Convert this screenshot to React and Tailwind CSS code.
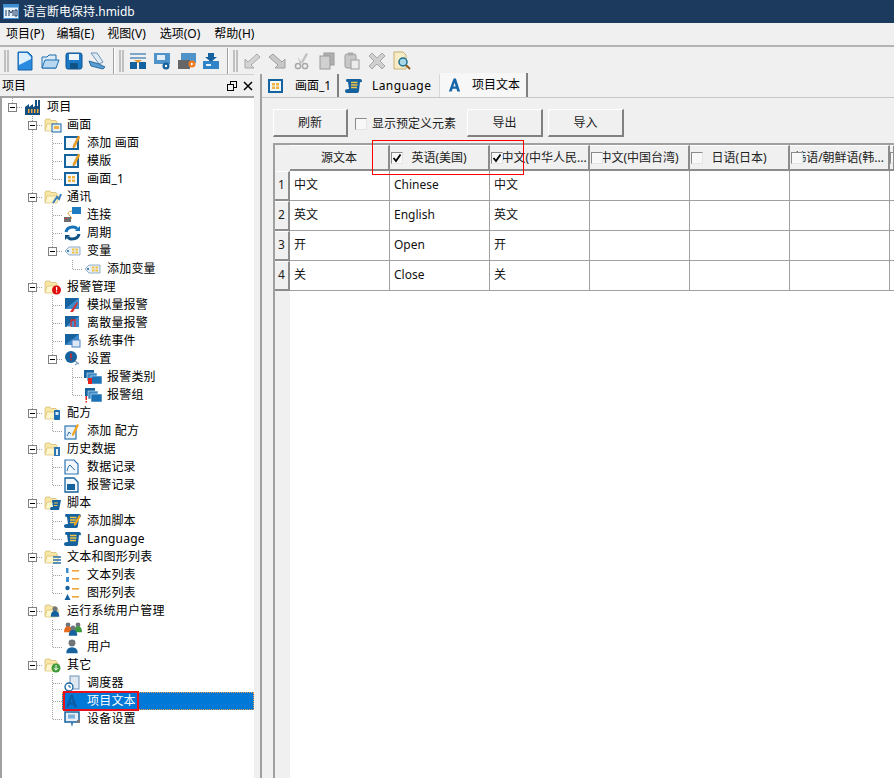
import React from "react";

const F = { fontFamily: '"Noto Sans","Noto Sans CJK SC",sans-serif' };

function Folder({ children }) {
  return (
    <svg width="18" height="16" viewBox="0 0 18 16" className="shrink-0">
      <path d="M1 13V3l1-1h4l1 1.500h5l1 1V13z" fill="#f8e6a4" stroke="#d0b872" strokeWidth="0.7" />
      <path d="M1 14l2-7h12l-2 7z" fill="#fef6cc" stroke="#d8bf72" strokeWidth="0.7" />
      {children}
    </svg>
  );
}

function Win({ children, frame = "#14639f" }) {
  return (
    <svg width="16" height="16" viewBox="0 0 16 16" className="shrink-0">
      <rect x="1" y="2" width="13" height="12" fill="#f3f8fc" stroke={frame} strokeWidth="2" />
      {children}
    </svg>
  );
}

const pencil = <path d="M9 11l5-10 2 1-5 10-2 1z" fill="#f3a51d" stroke="#b96f10" strokeWidth="0.4" />;
const grid = <g fill="#f2b23e"><rect x="4" y="5" width="3" height="2.500" /><rect x="8" y="5" width="3" height="2.500" /><rect x="4" y="8.500" width="3" height="2.500" /><rect x="8" y="8.500" width="3" height="2.500" /></g>;

function Scroll({ pen }) {
  return (
    <svg width="18" height="16" viewBox="0 0 18 16" className="shrink-0">
      <path d="M2 1h13q2 0 2 2t-2 1l-1 9q0 2-2 2H3q-3 0-3-2t3-2h1L3 4Q1 4 1 2.500T2 1z" fill="#15629e" />
      <path d="M6 4.500h6.500M6 7h6.500M6 9.500h6" stroke="#f0c34a" strokeWidth="1.300" />
      {pen && <path d="M10 11l5-9 2 1-5 9-2 1z" fill="#f3a51d" />}
    </svg>
  );
}

function Tag() {
  return (
    <svg width="18" height="14" viewBox="0 0 18 14" className="shrink-0">
      <path d="M1 7l4-4h11v8H5z" fill="#e6eef6" stroke="#7d9ebd" strokeWidth="0.8" />
      <circle cx="4" cy="7" r="1" fill="#15629e" />
      <g fill="#f2c33e"><rect x="8" y="4.500" width="2.500" height="2" /><rect x="11.500" y="4.500" width="2.500" height="2" /><rect x="8" y="7.500" width="2.500" height="2" /><rect x="11.500" y="7.500" width="2.500" height="2" /></g>
    </svg>
  );
}

function Mon({ children }) {
  return (
    <svg width="17" height="16" viewBox="0 0 17 16" className="shrink-0">
      <rect x="1" y="1" width="14" height="11" fill="#15629e" />
      <path d="M1 12L15 1v11z" fill="#3d8bca" />
      {children}
    </svg>
  );
}

function Person({ cx = 8, cy = 5, c = "#15629e", s = 1 }) {
  return (
    <g>
      <circle cx={cx} cy={cy} r={3 * s} fill="#6f747a" />
      <path d={`M${cx - 5 * s} ${cy + 9 * s}q0-6 ${5 * s}-6q${5 * s} 0 ${5 * s} 6z`} fill={c} />
    </g>
  );
}

const A = ({ c = "#1466a8" }) => (
  <svg width="15" height="16" viewBox="0 0 16 16" className="shrink-0">
    <path d="M2 15L7 1h2.500L14 15h-3l-1-3H6l-1 3zM6.800 9.500h2.500L8 5.500z" fill={c} />
  </svg>
);

const icons = {
  factory: (
    <svg width="18" height="17" viewBox="0 0 18 17" className="shrink-0">
      <path d="M1 16V8l4-3v3l4-3v3l2-1V1h2v6h1V1h2v15z" fill="#14507f" />
      <g fill="#f1a73c"><rect x="4" y="10" width="1.500" height="4" /><rect x="7" y="10" width="1.500" height="4" /><rect x="10" y="10" width="1.500" height="4" /><rect x="13" y="10" width="1.500" height="4" /></g>
    </svg>
  ),
  fScreen: <Folder><rect x="8" y="7" width="9" height="8" fill="#eaf2f9" stroke="#14639f" /><rect x="10" y="9" width="5" height="3" fill="#f2b23e" /></Folder>,
  fNet: <Folder><path d="M9 14l4-6 2 2 2-5" stroke="#3a7fb8" strokeWidth="2" fill="none" /></Folder>,
  fAlarm: <Folder><circle cx="12.500" cy="11" r="4.500" fill="#e01010" /><rect x="12" y="8" width="1.200" height="3.500" fill="#fff" /><rect x="12" y="12.300" width="1.200" height="1.200" fill="#fff" /></Folder>,
  fRecipe: <Folder><rect x="10" y="5" width="6" height="10" rx="1" fill="#1a6fb3" /><rect x="11.500" y="7" width="3" height="3" fill="#dcebf7" /></Folder>,
  fHist: <Folder><rect x="10" y="6" width="6" height="9" fill="#2f77b3" /><rect x="12" y="8" width="2" height="6" fill="#e8f1f9" /></Folder>,
  fScript: <Folder><path d="M8 5h9l-2 10H7q-2-1 0-3h2z" fill="#15629e" /><path d="M10 8h4M10 10.500h3.500" stroke="#f0c34a" /></Folder>,
  fList: <Folder><path d="M9 8h8M9 11h8M9 14h8" stroke="#2a72ad" strokeWidth="1.500" /></Folder>,
  fUser: <Folder><Person cx={11} cy={6} s={0.85} /></Folder>,
  fOther: <Folder><circle cx="12" cy="11" r="4.500" fill="#3f9b3a" /><path d="M12 8v5M9.800 11l2.200 2.200 2.200-2.200" stroke="#fff" fill="none" /></Folder>,
  addScreen: <Win>{pencil}</Win>,
  screen: <Win>{grid}</Win>,
  conn: (
    <svg width="17" height="16" viewBox="0 0 17 16" className="shrink-0">
      <rect x="8" y="0" width="9" height="7" fill="#1f7cc2" />
      <path d="M8 4Q2 5 5 8t3 3-3 2" stroke="#e2a33c" fill="none" />
      <rect x="0" y="10" width="7" height="5" fill="#6e6e6e" />
      <rect x="1" y="11" width="2" height="1" fill="#d93030" />
    </svg>
  ),
  cycle: (
    <svg width="17" height="16" viewBox="0 0 17 16" className="shrink-0" fill="none" stroke="#1572b8" strokeWidth="3">
      <path d="M2 7q1-5 7-5 3 0 4 2" />
      <path d="M15 9q-1 5-7 5-3 0-4-2" stroke="#0f5386" />
      <path d="M11 6h5V1z" fill="#1572b8" stroke="none" />
      <path d="M6 10H1v5z" fill="#0f5386" stroke="none" />
    </svg>
  ),
  tag: <Tag />,
  analog: <Mon><path d="M6 15L13 5l1 1-5 9z" fill="#d92c2c" /></Mon>,
  discrete: <Mon><path d="M7 12V5h4v7" stroke="#e02b2b" strokeWidth="1.300" fill="none" /><path d="M3 12h4" stroke="#fff" /></Mon>,
  sysev: <Mon><rect x="8" y="7" width="8" height="7" fill="#dde8f6" stroke="#4d82c4" /></Mon>,
  alarmSet: (
    <svg width="17" height="16" viewBox="0 0 17 16" className="shrink-0">
      <circle cx="7" cy="6" r="6" fill="#15629e" />
      <rect x="6.200" y="2.500" width="1.500" height="4.500" fill="#e41f1f" />
      <rect x="6.200" y="8" width="1.500" height="1.500" fill="#e41f1f" />
      <path d="M11 10l4 3M11 14l3-2" stroke="#7f9fbd" strokeWidth="1.200" />
    </svg>
  ),
  alarmCat: (
    <svg width="18" height="16" viewBox="0 0 18 16" className="shrink-0">
      <rect x="0" y="1" width="10" height="8" fill="#15629e" />
      <rect x="3" y="4" width="10" height="8" fill="#3c8ac6" stroke="#fff" strokeWidth="0.5" />
      <rect x="7" y="7" width="11" height="8" fill="#1d72b5" stroke="#fff" strokeWidth="0.5" />
      <rect x="4" y="9" width="4" height="6" fill="#e5231c" />
    </svg>
  ),
  alarmGrp: (
    <svg width="18" height="16" viewBox="0 0 18 16" className="shrink-0">
      <rect x="1" y="1" width="10" height="8" fill="#15629e" />
      <rect x="4" y="4" width="10" height="8" fill="#3c8ac6" stroke="#fff" strokeWidth="0.5" />
      <rect x="7" y="7" width="11" height="8" fill="#1d72b5" stroke="#fff" strokeWidth="0.5" />
      <rect x="1.500" y="9" width="1.500" height="4" fill="#e5231c" />
      <rect x="1.500" y="14" width="1.500" height="1.500" fill="#e5231c" />
    </svg>
  ),
  addRecipe: (
    <svg width="16" height="17" viewBox="0 0 16 17" className="shrink-0">
      <rect x="1" y="3" width="11" height="13" fill="#e9f1f9" stroke="#2c74b3" strokeWidth="1.200" />
      <path d="M3 13l2-4 2 2" stroke="#2c74b3" fill="none" />
      <path d="M8 11l5-10 2 1-5 10-2 1z" fill="#f3a51d" />
    </svg>
  ),
  dataRec: (
    <svg width="15" height="16" viewBox="0 0 15 16" className="shrink-0">
      <path d="M1 1h9l4 4v10H1z" fill="#f4f8fc" stroke="#2c74b3" strokeWidth="1.200" />
      <path d="M3 12q2-8 4-5t4 4" stroke="#2c74b3" fill="none" />
    </svg>
  ),
  alarmRec: (
    <svg width="15" height="16" viewBox="0 0 15 16" className="shrink-0">
      <path d="M1 1h9l4 4v10H1z" fill="#f4f8fc" stroke="#14639f" strokeWidth="1.300" />
      <rect x="3" y="7" width="8" height="6" fill="#15629e" />
    </svg>
  ),
  addScript: <Scroll pen />,
  script: <Scroll />,
  textList: (
    <svg width="16" height="16" viewBox="0 0 16 16" className="shrink-0">
      <rect x="2" y="1" width="2.500" height="5" fill="#3a8bd0" />
      <rect x="2" y="10" width="3" height="5" fill="#3a8bd0" />
      <rect x="8" y="3" width="7" height="1.600" fill="#f2a43a" />
      <rect x="8" y="11" width="7" height="1.600" fill="#f2a43a" />
    </svg>
  ),
  graphList: (
    <svg width="16" height="16" viewBox="0 0 16 16" className="shrink-0">
      <circle cx="3.500" cy="3" r="2.200" fill="#15629e" />
      <path d="M0.500 15l3-6 3 6z" fill="#15629e" />
      <rect x="8" y="3" width="7" height="1.600" fill="#f2a43a" />
      <rect x="8" y="11" width="7" height="1.600" fill="#f2a43a" />
    </svg>
  ),
  group: (
    <svg width="18" height="17" viewBox="0 0 18 17" className="shrink-0">
      <Person cx={4} cy={4} c="#e36a1e" s={0.8} />
      <Person cx={14} cy={4} c="#3c9a3c" s={0.8} />
      <Person cx={9} cy={7} c="#15629e" s={0.85} />
    </svg>
  ),
  user: <svg width="16" height="17" viewBox="0 0 16 17" className="shrink-0"><Person cx={8} cy={4} s={1.150} /></svg>,
  sched: (
    <svg width="17" height="17" viewBox="0 0 17 17" className="shrink-0">
      <rect x="6" y="1" width="9" height="13" fill="#dfe8f1" stroke="#6f93b5" />
      <circle cx="5" cy="12" r="4" fill="#fff" stroke="#15629e" strokeWidth="1.300" />
      <path d="M5 10v2h2" stroke="#15629e" fill="none" />
    </svg>
  ),
  projText: <A c="#0c5da6" />,
  device: (
    <svg width="17" height="17" viewBox="0 0 17 17" className="shrink-0">
      <rect x="1" y="1" width="14" height="10" fill="#e6eff7" stroke="#15629e" strokeWidth="1.500" />
      <rect x="4" y="3.500" width="7" height="4" fill="#7fb0d9" />
      <path d="M7 12h2l-1 4z" fill="#15629e" />
      <rect x="13" y="9" width="3" height="3" fill="#7a7a7a" />
    </svg>
  ),
};

const tree = {
  t: "项目", i: "factory", c: [
    { t: "画面", i: "fScreen", c: [{ t: "添加 画面", i: "addScreen" }, { t: "模版", i: "addScreen" }, { t: "画面_1", i: "screen" }] },
    { t: "通讯", i: "fNet", c: [{ t: "连接", i: "conn" }, { t: "周期", i: "cycle" }, { t: "变量", i: "tag", c: [{ t: "添加变量", i: "tag" }] }] },
    { t: "报警管理", i: "fAlarm", c: [
      { t: "模拟量报警", i: "analog" }, { t: "离散量报警", i: "discrete" }, { t: "系统事件", i: "sysev" },
      { t: "设置", i: "alarmSet", c: [{ t: "报警类别", i: "alarmCat" }, { t: "报警组", i: "alarmGrp" }] },
    ] },
    { t: "配方", i: "fRecipe", c: [{ t: "添加 配方", i: "addRecipe" }] },
    { t: "历史数据", i: "fHist", c: [{ t: "数据记录", i: "dataRec" }, { t: "报警记录", i: "alarmRec" }] },
    { t: "脚本", i: "fScript", c: [{ t: "添加脚本", i: "addScript" }, { t: "Language", i: "script" }] },
    { t: "文本和图形列表", i: "fList", c: [{ t: "文本列表", i: "textList" }, { t: "图形列表", i: "graphList" }] },
    { t: "运行系统用户管理", i: "fUser", c: [{ t: "组", i: "group" }, { t: "用户", i: "user" }] },
    { t: "其它", i: "fOther", c: [{ t: "调度器", i: "sched" }, { t: "项目文本", i: "projText", sel: true }, { t: "设备设置", i: "device" }] },
  ],
};

function flatten(n, trail = [], last = true, out = []) {
  out.push({ n, trail, last });
  (n.c || []).forEach((k, i) => flatten(k, [...trail, !last], i === n.c.length - 1, out));
  return out;
}

const DOT = { stroke: "#a0a0a0", strokeWidth: 1, strokeDasharray: "1 1", shapeRendering: "crispEdges" };

function Cell({ through }) {
  return (
    <svg width="20" height="18" className="shrink-0">
      {through && <line x1="10.500" y1="0" x2="10.500" y2="18" style={DOT} />}
    </svg>
  );
}

function Joint({ last, box }) {
  return (
    <svg width="20" height="18" className="shrink-0">
      <line x1="10.500" y1="0" x2="10.500" y2={last ? 9 : 18} style={DOT} />
      <line x1="10.500" y1="9.500" x2="21" y2="9.500" style={DOT} />
      {box && (
        <g shapeRendering="crispEdges">
          <rect x="6.500" y="5.500" width="8" height="8" fill="#fff" stroke="#808080" />
          <line x1="8" y1="9.500" x2="13" y2="9.500" stroke="#000" />
        </g>
      )}
    </svg>
  );
}

function TreeRow({ item }) {
  const { n, trail, last } = item;
  return (
    <div className="flex h-[18px] items-center">
      {trail.map((b, i) => i === 0 ? <Cell key={i} through={false} /> : <Cell key={i} through={b} />)}
      <Joint last={last} box={!!n.c} />
      <div className={`flex h-[18px] flex-1 items-center ${n.sel ? "border border-dotted border-[#f0a040] bg-[#0078d7] pl-[1px] text-white" : "pl-[2px] text-black"}`}>
        <span className="flex w-[22px] shrink-0 items-center">{icons[n.i]}</span>
        <span className="whitespace-nowrap pl-[1px] text-[12px] leading-[16px] tracking-[0.2px]">{n.t}</span>
      </div>
    </div>
  );
}

const Grip = ({ mr }) => (
  <div className={`ml-[4px] flex h-[22px] gap-[1px] ${mr}`}>
    <div className="w-[2px] bg-[#c0c0c0]" />
    <div className="w-[2px] bg-[#c0c0c0]" />
  </div>
);
const Sep = () => <div className="ml-[5px] h-[26px] w-[2px] border-l border-[#a0a0a0] bg-white" />;

const TB = {
  doc: <svg width="18" height="20" viewBox="0 0 18 20"><path d="M2 1h10l4 4v14H2z" fill="#2a8ae0" stroke="#1463a8" /><path d="M3 2h8l4 4v2L3 14z" fill="#dcefff" /></svg>,
  open: <svg width="20" height="18" viewBox="0 0 20 18"><path d="M2 16V5h5l2-2h7v13z" fill="#ddebf7" stroke="#1e6fb0" /><path d="M2 16l3-8h14l-3 8z" fill="#b8d8f2" stroke="#1e6fb0" /></svg>,
  save: <svg width="18" height="18" viewBox="0 0 18 18"><rect x="1" y="1" width="16" height="16" rx="2" fill="#1a79c6" stroke="#10558f" /><rect x="4" y="2" width="10" height="6" fill="#eef6fc" /><rect x="5" y="11" width="8" height="6" fill="#0f5386" /></svg>,
  print: <svg width="18" height="18" viewBox="0 0 18 18"><path d="M3 1h6l6 9-4 2z" fill="#dfeaf4" stroke="#6c93b7" /><path d="M1 9l10 3 6 3-2 2-12-3z" fill="#5b9ed4" stroke="#2c6d9f" /></svg>,
  tb1: <svg width="18" height="18" viewBox="0 0 18 18"><g fill="#7da7c9"><rect x="1" y="1" width="16" height="2" /><rect x="1" y="5" width="16" height="2" /></g><rect x="1" y="10" width="7" height="7" fill="#15629e" /><rect x="10" y="10" width="7" height="7" fill="#15629e" /><path d="M5 8h8l-4 3z" fill="#e8922b" /></svg>,
  tb2: <svg width="18" height="18" viewBox="0 0 18 18"><rect x="1" y="1" width="16" height="11" fill="#4f93c9" /><rect x="4" y="3" width="8" height="5" fill="#e0ecf6" /><circle cx="13" cy="14" r="3.500" fill="#15629e" /><circle cx="13" cy="14" r="1.200" fill="#fff" /></svg>,
  tb3: <svg width="20" height="18" viewBox="0 0 20 18"><rect x="4" y="1" width="15" height="10" fill="#4f93c9" /><rect x="1" y="8" width="12" height="9" fill="#666" /><circle cx="15" cy="12" r="3.500" fill="#ef7d22" /><path d="M14 10.500v3l2.500-1.500z" fill="#fff" /></svg>,
  tb4: <svg width="18" height="18" viewBox="0 0 18 18"><rect x="1" y="9" width="16" height="8" fill="#2f83c6" /><rect x="4" y="12" width="5" height="2" fill="#e8f2fa" /><path d="M6 1h6v4h3l-6 5-6-5h3z" fill="#15629e" /></svg>,
  undo: <svg width="18" height="18" viewBox="0 0 18 18"><path d="M2 16V7l3 3 9-8 3 3-9 8 3 3z" fill="#d4d4d4" stroke="#a8a8a8" /></svg>,
  redo: <svg width="18" height="18" viewBox="0 0 18 18"><path d="M17 16V7l-3 3L5 2 1 5l9 8-3 3z" fill="#c8c8c8" stroke="#a0a0a0" /></svg>,
  cut: <svg width="16" height="18" viewBox="0 0 16 18"><path d="M12 1l-5 9 2 1 5-9zM4 5l4 6-2 1z" fill="#c0c0c0" /><circle cx="4" cy="14" r="2.600" fill="none" stroke="#a8a8a8" strokeWidth="1.500" /><circle cx="11" cy="14" r="2.600" fill="none" stroke="#a8a8a8" strokeWidth="1.500" /></svg>,
  copy: <svg width="16" height="18" viewBox="0 0 16 18"><rect x="5" y="1" width="10" height="12" fill="#b0b0b0" stroke="#999" /><rect x="1" y="4" width="10" height="13" fill="#d0d0d0" stroke="#999" /></svg>,
  paste: <svg width="16" height="18" viewBox="0 0 16 18"><rect x="1" y="2" width="11" height="14" rx="2" fill="#c8c8c8" stroke="#9c9c9c" /><rect x="4" y="0.500" width="5" height="3" fill="#aaa" /><rect x="7" y="8" width="8" height="9" fill="#ececec" stroke="#9c9c9c" /></svg>,
  del: <svg width="18" height="18" viewBox="0 0 18 18"><path d="M4 1l5 5 5-5 3 3-5 5 5 5-3 3-5-5-5 5-3-3 5-5-5-5z" fill="#cfcfcf" stroke="#a8a8a8" /></svg>,
  find: <svg width="18" height="20" viewBox="0 0 18 20"><path d="M1 1h9l3 3v14H1z" fill="#f8ecc8" stroke="#c8b070" /><circle cx="10" cy="11" r="4" fill="#a8d8e8" stroke="#1b6f8f" strokeWidth="1.500" /><path d="M13 14l4 4" stroke="#8a5a1f" strokeWidth="2" /></svg>,
};

function TBtn({ k, w = 25 }) {
  return <div className="flex h-[26px] shrink-0 items-center justify-center" style={{ width: w }}>{TB[k]}</div>;
}

function Btn({ children, w }) {
  return (
    <button className={`flex h-[28px] ${w} items-center justify-center border-t border-l border-b-2 border-r-2 border-t-[#fff] border-l-[#fff] border-b-[#808080] border-r-[#808080] bg-[#f0f0f0] text-[12px] text-[#222]`}>
      {children}
    </button>
  );
}

function CB({ on, cls = "" }) {
  return (
    <span className={`flex h-[12px] w-[12px] items-center justify-center border border-t-[#8a8a8a] border-l-[#8a8a8a] border-r-[#e4e4e4] border-b-[#e4e4e4] bg-[#f8f8f8] ${cls}`}>
      {on && <svg width="10" height="10" viewBox="0 0 10 10"><path d="M1.500 5l2.500 3L8.500 1.500" fill="none" stroke="#000" strokeWidth="1.800" /></svg>}
    </span>
  );
}

const cols = [
  { t: "英语(美国)", on: true },
  { t: "中文(中华人民...", on: true },
  { t: "中文(中国台湾)" },
  { t: "日语(日本)" },
  { t: "韩语/朝鲜语(韩..." },
];
const rows = [["中文", "Chinese", "中文"], ["英文", "English", "英文"], ["开", "Open", "开"], ["关", "Close", "关"]];

const HCell = ({ children, w = "w-[100px]" }) => (
  <div className={`relative flex h-full ${w} shrink-0 items-center justify-center overflow-hidden whitespace-nowrap border-t border-r-2 border-b-2 border-t-white border-r-[#8c8c8c] border-b-[#8c8c8c] bg-[#f0f0f0] text-[12px] text-[#222]`}>
    {children}
  </div>
);

export default function App() {
  const flat = flatten(tree);
  return (
    <div className="relative flex h-[778px] w-[894px] flex-col overflow-hidden bg-[#f0f0f0] text-[12px] text-black" style={F}>
      {/* title */}
      <div className="flex h-[23px] shrink-0 items-center gap-[4px] bg-[#1b3a5e] pl-[3px] text-white">
        <svg width="16" height="15" viewBox="0 0 16 15">
          <rect x="0.500" y="0.500" width="15" height="14" fill="#e8f2fb" stroke="#3f8fd2" />
          <rect x="0.500" y="0.500" width="15" height="3" fill="#3f8fd2" />
          <path d="M3 6v6M6 12V6l2 3 2-3v6M12 6h2v6h-2z" stroke="#1b3a5e" fill="none" />
        </svg>
        <span className="text-[12px]">语言断电保持.hmidb</span>
      </div>
      {/* menu */}
      <div className="flex h-[22px] shrink-0 items-center pl-[6px] text-[12px] text-black">
        <span className="mr-[12px]">项目(P)</span>
        <span className="mr-[13px]">编辑(E)</span>
        <span className="mr-[14px]">视图(V)</span>
        <span className="mr-[14px]">选项(O)</span>
        <span>帮助(H)</span>
      </div>
      {/* toolbar */}
      <div className="flex h-[29px] shrink-0 items-center border-t-2 border-[#b4b4b4]">
        <Grip mr="mr-[3px]" />
        <div className="flex w-[96px]"><TBtn k="doc" /><TBtn k="open" /><TBtn k="save" w={24} /><TBtn k="print" w={22} /></div>
        <Sep />
        <Grip mr="mr-[2px]" />
        <div className="flex w-[96px]"><TBtn k="tb1" w={24} /><TBtn k="tb2" w={24} /><TBtn k="tb3" w={25} /><TBtn k="tb4" w={23} /></div>
        <Sep />
        <Grip mr="mr-[1px]" />
        <div className="flex"><TBtn k="undo" /><TBtn k="redo" /><TBtn k="cut" /><TBtn k="copy" /><TBtn k="paste" /><TBtn k="del" /><TBtn k="find" /></div>
      </div>
      <div className="flex min-h-0 flex-1">
        {/* left dock */}
        <div className="flex w-[254px] shrink-0 flex-col">
          <div className="flex h-[22px] shrink-0 items-center justify-between border-t border-[#d0d0d0] pl-[2px] text-[12px]">
            <span>项目</span>
            <span className="flex items-center gap-[6px] pr-[1px]">
              <svg width="10" height="10" viewBox="0 0 10 10"><rect x="3.500" y="0.500" width="6" height="6" fill="none" stroke="#000" /><rect x="0.500" y="3.500" width="6" height="6" fill="#f0f0f0" stroke="#000" /></svg>
              <svg width="10" height="10" viewBox="0 0 10 10"><path d="M1 1l8 8M9 1l-8 8" stroke="#000" strokeWidth="1.500" /></svg>
            </span>
          </div>
          <div className="flex-1 overflow-hidden border-t-2 border-l-2 border-[#a0a0a0] bg-white">
            {flat.map((it, i) => <TreeRow key={i} item={it} />)}
          </div>
        </div>
        {/* splitter */}
        <div className="w-[8px] shrink-0 border-r-2 border-[#a0a0a0] bg-[#f0f0f0]" />
        {/* right */}
        <div className="flex min-w-0 flex-1 flex-col">
          <div className="flex h-[24px] shrink-0 items-end border-b border-[#c8c8c8] pl-[2px]">
            <div className="flex h-[23px] w-[75px] items-center border-r-2 border-[#808080] bg-[#f0f0f0] pl-[4px]">
              <Win>{grid}</Win>
              <span className="pl-[11px] text-[12px]">画面_1</span>
            </div>
            <div className="flex h-[23px] w-[101px] items-center border-r border-[#d8d8d8] bg-[#f0f0f0] pl-[6px]">
              <Scroll />
              <span className="pl-[9px] text-[12px] tracking-[0.4px]">Language</span>
            </div>
            <div className="flex h-[24px] w-[88px] items-center border-r-2 border-[#808080] bg-[#f7f7f7] pl-[7px]">
              <A />
              <span className="pl-[10px] text-[12px]">项目文本</span>
            </div>
          </div>
          <div className="flex min-h-0 flex-1 flex-col pl-[11px]">
            <div className="flex h-[45px] shrink-0 items-start pt-[11px]">
              <Btn w="w-[75px]">刷新</Btn>
              <label className="ml-[7px] flex w-[112px] items-center gap-[5px] pt-[6px] text-[12px] text-[#222]">
                <CB />
                <span className="whitespace-nowrap">显示预定义元素</span>
              </label>
              <Btn w="w-[76px]">导出</Btn>
              <div className="w-[5px]" />
              <Btn w="w-[76px]">导入</Btn>
            </div>
            {/* table */}
            <div className="flex min-h-0 flex-1 flex-col border-t-2 border-l-2 border-[#a0a0a0] bg-white">
              <div className="flex h-[26px] shrink-0">
                <div className="h-full w-[15px] shrink-0 bg-[#f0f0f0]" />
                <HCell>源文本</HCell>
                {cols.map((c, i) => (
                  <HCell key={i}>
                    <span className={i === 1 ? "pl-[10px]" : ""}>{c.t}</span>
                    <CB on={c.on} cls="absolute left-[1px] top-[6px]" />
                  </HCell>
                ))}
                <HCell w="w-[5px]"><CB cls="absolute left-[0px] top-[6px]" /></HCell>
              </div>
              <div className="flex min-h-0 flex-1">
                <div className="flex w-[15px] shrink-0 flex-col bg-[#f0f0f0]">
                  {[1, 2, 3, 4].map((n) => (
                    <div key={n} className="flex h-[30px] items-center justify-center border-t border-r-2 border-b-2 border-t-white border-r-[#8c8c8c] border-b-[#8c8c8c] pb-[1px] text-[12px] text-[#222]">{n}</div>
                  ))}
                </div>
                <div className="flex-1">
                  {rows.map((r, i) => (
                    <div key={i} className="flex h-[30px]">
                      {[...r, "", "", "", "", ""].map((t, j) => (
                        <div key={j} className={`flex h-full ${j === 7 ? "w-[5px] border-r-0" : "w-[100px] border-r"} shrink-0 items-center border-b border-[#a0a0a0] pb-[2px] pl-[4px] text-[12px] text-[#111]`}>{t}</div>
                      ))}
                    </div>
                  ))}
                </div>
              </div>
            </div>
          </div>
        </div>
      </div>
      {/* red annotation frames */}
      <div className="pointer-events-none absolute left-[372px] top-[140px] h-[35px] w-[152px] border border-[#ff0000]" />
      <div className="pointer-events-none absolute left-[63px] top-[691px] h-[20px] w-[76px] border-2 border-[#e8101c]" />
    </div>
  );
}
